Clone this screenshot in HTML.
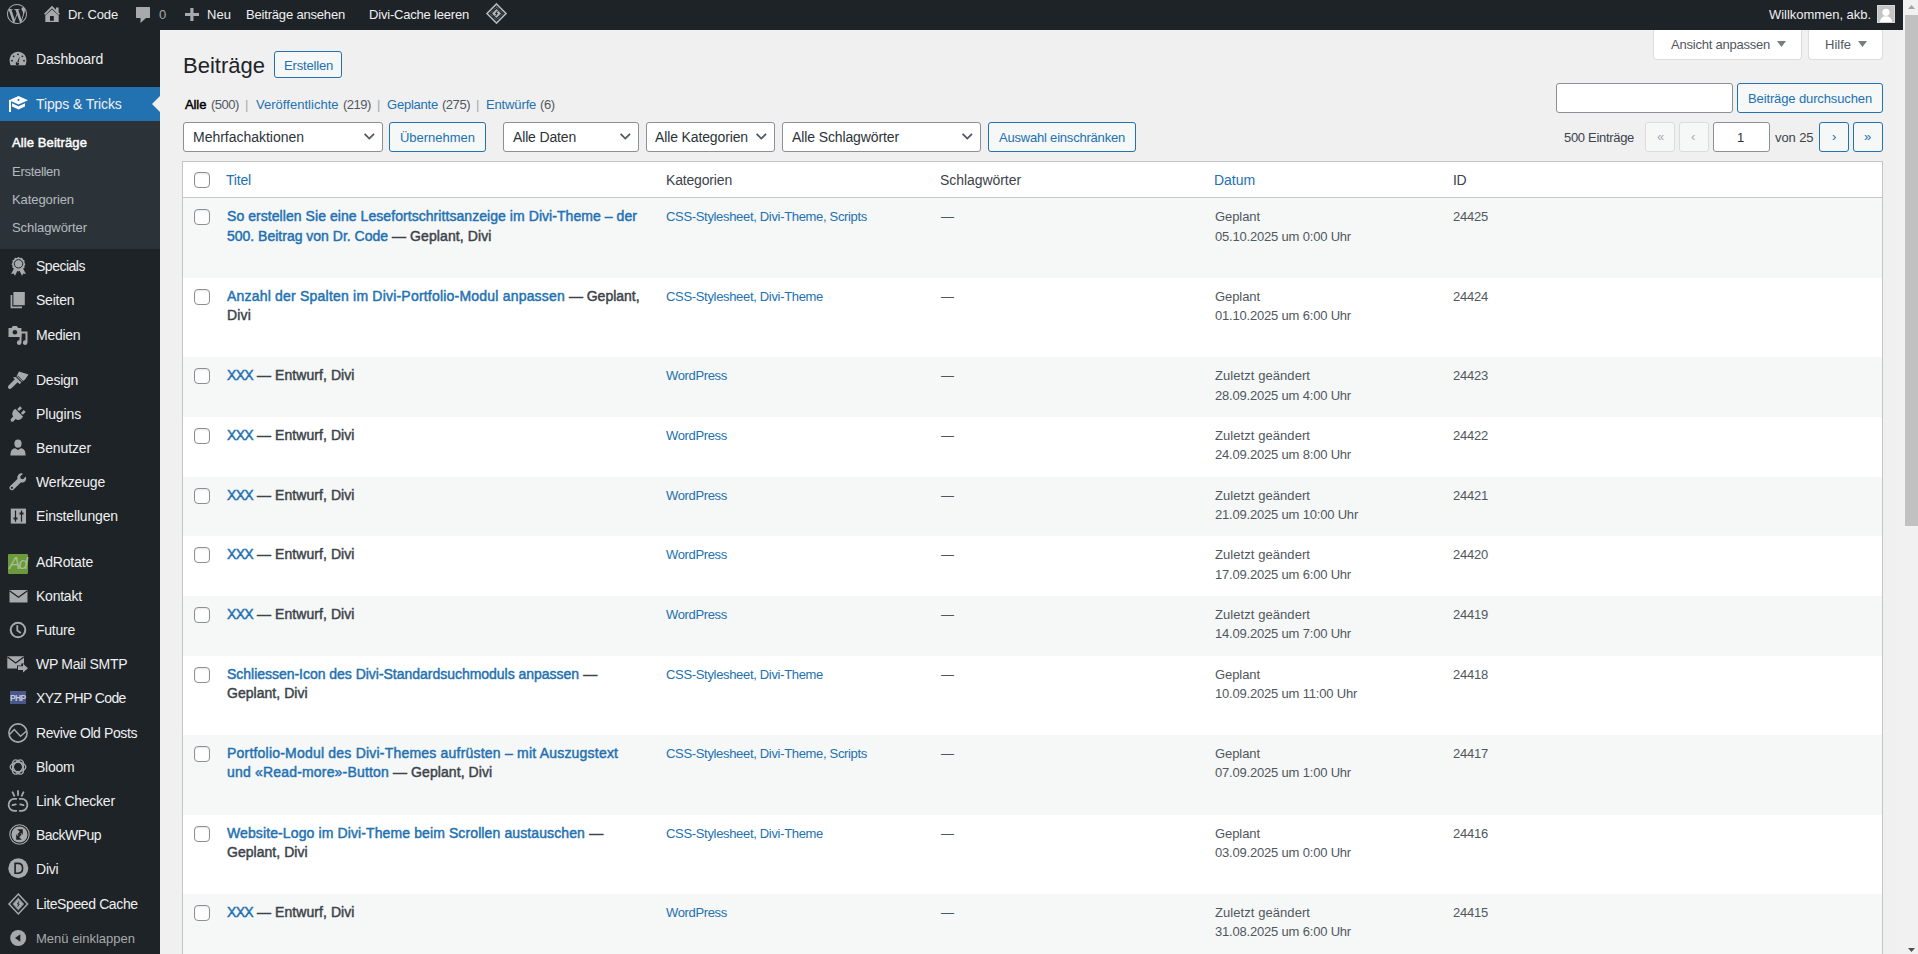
<!DOCTYPE html>
<html lang="de">
<head>
<meta charset="utf-8">
<title>Beiträge</title>
<style>
html,body{margin:0;padding:0;width:1918px;height:954px;overflow:hidden;background:#f0f0f1;font-family:'Liberation Sans',sans-serif;}
.abs{position:absolute}
.t{position:absolute;white-space:nowrap;line-height:20px;font-family:'Liberation Sans',sans-serif}
#adminbar{position:absolute;left:0;top:0;width:1903px;height:30px;background:#1d2327}
#side{position:absolute;left:0;top:30px;width:160px;height:924px;background:#1d2327}
#sub{position:absolute;left:0;top:121px;width:160px;height:128px;background:#2c3338}
#cur{position:absolute;left:0;top:87px;width:160px;height:34px;background:#2271b1}
#arrow{position:absolute;left:152px;top:96px;width:0;height:0;border-top:8px solid transparent;border-bottom:8px solid transparent;border-right:8px solid #f0f0f1}
#sb{position:absolute;left:1903px;top:0;width:15px;height:954px;background:#f1f1f1}
#thumb{position:absolute;left:1905px;top:15px;width:13px;height:511px;background:#c1c1c1}
.btn{position:absolute;box-sizing:border-box;border:1px solid #2271b1;border-radius:3px;background:#f6f7f7}
.sel{position:absolute;box-sizing:border-box;border:1px solid #8c8f94;border-radius:3px;background:#fff}
.pg{position:absolute;box-sizing:border-box;border:1px solid #dcdcde;border-radius:3px;background:#f6f7f7;top:122px;width:30px;height:30px}
.pgb{position:absolute;box-sizing:border-box;border:1px solid #2271b1;border-radius:3px;background:#f6f7f7;top:122px;width:30px;height:30px}
.tab{position:absolute;box-sizing:border-box;border:1px solid #dcdcde;border-top:0;border-radius:0 0 4px 4px;background:#fff;top:30px;height:30px}
.row{position:absolute;left:183px;width:1699px}
.cb{position:absolute;box-sizing:border-box;width:16px;height:16px;border:1px solid #8c8f94;border-radius:4px;background:#fff;box-shadow:inset 0 1px 2px rgba(0,0,0,.1)}
.chev{position:absolute;width:7px;height:7px;border-right:2px solid #50575e;border-bottom:2px solid #50575e;transform:rotate(45deg)}
svg{position:absolute;overflow:visible}
</style>
</head>
<body>
<div id="adminbar"></div>
<div id="side"></div>
<div id="cur"></div>
<div id="sub"></div>
<div id="arrow"></div>

<!-- screen options tabs -->
<div class="tab" style="left:1653px;width:149px"></div>
<div class="tab" style="left:1808px;width:75px"></div>
<svg style="left:1777px;top:41px" width="9" height="6" viewBox="0 0 9 6"><path d="M0 0H9L4.5 6Z" fill="#787c82"/></svg>
<svg style="left:1858px;top:41px" width="9" height="6" viewBox="0 0 9 6"><path d="M0 0H9L4.5 6Z" fill="#787c82"/></svg>

<!-- Erstellen button -->
<div class="btn" style="left:274px;top:51px;width:68px;height:27px"></div>

<!-- search -->
<div class="sel" style="left:1556px;top:83px;width:177px;height:30px"></div>
<div class="btn" style="left:1737px;top:83px;width:146px;height:30px"></div>

<!-- tablenav -->
<div class="sel" style="left:183px;top:122px;width:200px;height:30px"></div>
<svg style="left:364px;top:133px" width="11" height="8" viewBox="0 0 11 8"><path fill="none" stroke="#50575e" stroke-width="1.8" d="M.6 .9L5.3 5.6 10 .9"/></svg>
<div class="btn" style="left:389px;top:122px;width:97px;height:30px"></div>
<div class="sel" style="left:503px;top:122px;width:136px;height:30px"></div>
<svg style="left:620px;top:133px" width="11" height="8" viewBox="0 0 11 8"><path fill="none" stroke="#50575e" stroke-width="1.8" d="M.6 .9L5.3 5.6 10 .9"/></svg>
<div class="sel" style="left:646px;top:122px;width:129px;height:30px"></div>
<svg style="left:756px;top:133px" width="11" height="8" viewBox="0 0 11 8"><path fill="none" stroke="#50575e" stroke-width="1.8" d="M.6 .9L5.3 5.6 10 .9"/></svg>
<div class="sel" style="left:782px;top:122px;width:199px;height:30px"></div>
<svg style="left:962px;top:133px" width="11" height="8" viewBox="0 0 11 8"><path fill="none" stroke="#50575e" stroke-width="1.8" d="M.6 .9L5.3 5.6 10 .9"/></svg>
<div class="btn" style="left:988px;top:122px;width:148px;height:30px"></div>

<!-- pagination -->
<div class="pg" style="left:1645px"></div>
<div class="pg" style="left:1679px"></div>
<div class="sel" style="left:1713px;top:122px;width:57px;height:30px"></div>
<div class="pgb" style="left:1819px"></div>
<div class="pgb" style="left:1853px"></div>
<div class="t" style="left:1657px;top:127px;font-size:13px;color:#a7aaad">«</div>
<div class="t" style="left:1691px;top:127px;font-size:13px;color:#a7aaad">‹</div>
<div class="t" style="left:1832px;top:127px;font-size:13px;color:#2271b1">›</div>
<div class="t" style="left:1864px;top:127px;font-size:13px;color:#2271b1">»</div>

<!-- table -->
<div class="abs" style="left:182px;top:161px;width:1701px;height:800px;box-sizing:border-box;border:1px solid #c3c4c7;background:#fff"></div>
<div class="abs" style="left:183px;top:197px;width:1699px;height:1px;background:#c3c4c7"></div>
<div class="cb" style="left:194px;top:172px"></div>
<div class="row" style="top:198px;height:80px;background:#f6f7f7"></div>
<div class="cb" style="left:194px;top:209px"></div>
<div class="row" style="top:278px;height:79px;background:#fff"></div>
<div class="cb" style="left:194px;top:289px"></div>
<div class="row" style="top:357px;height:60px;background:#f6f7f7"></div>
<div class="cb" style="left:194px;top:368px"></div>
<div class="row" style="top:417px;height:60px;background:#fff"></div>
<div class="cb" style="left:194px;top:428px"></div>
<div class="row" style="top:477px;height:59px;background:#f6f7f7"></div>
<div class="cb" style="left:194px;top:488px"></div>
<div class="row" style="top:536px;height:60px;background:#fff"></div>
<div class="cb" style="left:194px;top:547px"></div>
<div class="row" style="top:596px;height:60px;background:#f6f7f7"></div>
<div class="cb" style="left:194px;top:607px"></div>
<div class="row" style="top:656px;height:79px;background:#fff"></div>
<div class="cb" style="left:194px;top:667px"></div>
<div class="row" style="top:735px;height:80px;background:#f6f7f7"></div>
<div class="cb" style="left:194px;top:746px"></div>
<div class="row" style="top:815px;height:79px;background:#fff"></div>
<div class="cb" style="left:194px;top:826px"></div>
<div class="row" style="top:894px;height:60px;background:#f6f7f7"></div>
<div class="cb" style="left:194px;top:905px"></div>

<div class="t" style="left:68px;top:5px;font-size:13px;font-weight:400;color:#f0f0f1;letter-spacing:-0.163px">Dr. Code</div>
<div class="t" style="left:159px;top:5px;font-size:13px;font-weight:400;color:#a7aaad;letter-spacing:0.270px">0</div>
<div class="t" style="left:207px;top:5px;font-size:13px;font-weight:400;color:#f0f0f1;letter-spacing:0.051px">Neu</div>
<div class="t" style="left:246px;top:5px;font-size:13px;font-weight:400;color:#f0f0f1;letter-spacing:-0.182px">Beiträge ansehen</div>
<div class="t" style="left:369px;top:5px;font-size:13px;font-weight:400;color:#f0f0f1;letter-spacing:-0.195px">Divi-Cache leeren</div>
<div class="t" style="left:1769px;top:5px;font-size:13px;font-weight:400;color:#f0f0f1;letter-spacing:-0.036px">Willkommen, akb.</div>
<div class="t" style="left:36px;top:49px;font-size:14px;font-weight:400;color:#f0f0f1;letter-spacing:-0.165px">Dashboard</div>
<div class="t" style="left:36px;top:94px;font-size:14px;font-weight:400;color:#f0f0f1;letter-spacing:-0.117px">Tipps &amp; Tricks</div>
<div class="t" style="left:36px;top:256px;font-size:14px;font-weight:400;color:#f0f0f1;letter-spacing:-0.490px">Specials</div>
<div class="t" style="left:36px;top:290px;font-size:14px;font-weight:400;color:#f0f0f1;letter-spacing:-0.232px">Seiten</div>
<div class="t" style="left:36px;top:325px;font-size:14px;font-weight:400;color:#f0f0f1;letter-spacing:-0.268px">Medien</div>
<div class="t" style="left:36px;top:370px;font-size:14px;font-weight:400;color:#f0f0f1;letter-spacing:-0.254px">Design</div>
<div class="t" style="left:36px;top:404px;font-size:14px;font-weight:400;color:#f0f0f1;letter-spacing:-0.131px">Plugins</div>
<div class="t" style="left:36px;top:438px;font-size:14px;font-weight:400;color:#f0f0f1;letter-spacing:-0.129px">Benutzer</div>
<div class="t" style="left:36px;top:472px;font-size:14px;font-weight:400;color:#f0f0f1;letter-spacing:-0.173px">Werkzeuge</div>
<div class="t" style="left:36px;top:506px;font-size:14px;font-weight:400;color:#f0f0f1;letter-spacing:-0.159px">Einstellungen</div>
<div class="t" style="left:36px;top:552px;font-size:14px;font-weight:400;color:#f0f0f1;letter-spacing:-0.172px">AdRotate</div>
<div class="t" style="left:36px;top:586px;font-size:14px;font-weight:400;color:#f0f0f1;letter-spacing:-0.237px">Kontakt</div>
<div class="t" style="left:36px;top:620px;font-size:14px;font-weight:400;color:#f0f0f1;letter-spacing:-0.236px">Future</div>
<div class="t" style="left:36px;top:654px;font-size:14px;font-weight:400;color:#f0f0f1;letter-spacing:-0.277px">WP Mail SMTP</div>
<div class="t" style="left:36px;top:688px;font-size:14px;font-weight:400;color:#f0f0f1;letter-spacing:-0.605px">XYZ PHP Code</div>
<div class="t" style="left:36px;top:723px;font-size:14px;font-weight:400;color:#f0f0f1;letter-spacing:-0.398px">Revive Old Posts</div>
<div class="t" style="left:36px;top:757px;font-size:14px;font-weight:400;color:#f0f0f1;letter-spacing:-0.278px">Bloom</div>
<div class="t" style="left:36px;top:791px;font-size:14px;font-weight:400;color:#f0f0f1;letter-spacing:-0.238px">Link Checker</div>
<div class="t" style="left:36px;top:825px;font-size:14px;font-weight:400;color:#f0f0f1;letter-spacing:-0.531px">BackWPup</div>
<div class="t" style="left:36px;top:859px;font-size:14px;font-weight:400;color:#f0f0f1;letter-spacing:-0.204px">Divi</div>
<div class="t" style="left:36px;top:894px;font-size:14px;font-weight:400;color:#f0f0f1;letter-spacing:-0.381px">LiteSpeed Cache</div>
<div class="t" style="left:12px;top:133px;font-size:13px;font-weight:400;color:#ffffff;letter-spacing:0.099px;-webkit-text-stroke:0.45px currentColor">Alle Beiträge</div>
<div class="t" style="left:12px;top:162px;font-size:13px;font-weight:400;color:rgba(240,246,252,.7);letter-spacing:-0.286px">Erstellen</div>
<div class="t" style="left:12px;top:190px;font-size:13px;font-weight:400;color:rgba(240,246,252,.7);letter-spacing:-0.088px">Kategorien</div>
<div class="t" style="left:12px;top:218px;font-size:13px;font-weight:400;color:rgba(240,246,252,.7);letter-spacing:-0.072px">Schlagwörter</div>
<div class="t" style="left:36px;top:929px;font-size:13px;font-weight:400;color:#a7aaad;letter-spacing:-0.001px">Menü einklappen</div>
<div class="t" style="left:183px;top:56px;font-size:22px;font-weight:400;color:#1d2327;letter-spacing:0.007px">Beiträge</div>
<div class="t" style="left:284px;top:56px;font-size:13px;font-weight:400;color:#2271b1;letter-spacing:-0.175px">Erstellen</div>
<div class="t" style="left:1671px;top:35px;font-size:13px;font-weight:400;color:#50575e;letter-spacing:-0.226px">Ansicht anpassen</div>
<div class="t" style="left:1825px;top:35px;font-size:13px;font-weight:400;color:#50575e;letter-spacing:-0.001px">Hilfe</div>
<div class="t" style="left:185px;top:95px;font-size:13px;font-weight:400;color:#000;letter-spacing:-0.094px;-webkit-text-stroke:0.45px currentColor">Alle</div>
<div class="t" style="left:211px;top:95px;font-size:13px;font-weight:400;color:#50575e;letter-spacing:-0.530px">(500)</div>
<div class="t" style="left:245px;top:95px;font-size:13px;font-weight:400;color:#a7aaad;letter-spacing:0.000px">|</div>
<div class="t" style="left:256px;top:95px;font-size:13px;font-weight:400;color:#2271b1;letter-spacing:0.030px">Veröffentlichte</div>
<div class="t" style="left:343px;top:95px;font-size:13px;font-weight:400;color:#50575e;letter-spacing:-0.530px">(219)</div>
<div class="t" style="left:377px;top:95px;font-size:13px;font-weight:400;color:#a7aaad;letter-spacing:0.000px">|</div>
<div class="t" style="left:387px;top:95px;font-size:13px;font-weight:400;color:#2271b1;letter-spacing:-0.220px">Geplante</div>
<div class="t" style="left:442px;top:95px;font-size:13px;font-weight:400;color:#50575e;letter-spacing:-0.470px">(275)</div>
<div class="t" style="left:476px;top:95px;font-size:13px;font-weight:400;color:#a7aaad;letter-spacing:0.000px">|</div>
<div class="t" style="left:486px;top:95px;font-size:13px;font-weight:400;color:#2271b1;letter-spacing:-0.138px">Entwürfe</div>
<div class="t" style="left:540px;top:95px;font-size:13px;font-weight:400;color:#50575e;letter-spacing:-0.429px">(6)</div>
<div class="t" style="left:1748px;top:89px;font-size:13px;font-weight:400;color:#2271b1;letter-spacing:-0.124px">Beiträge durchsuchen</div>
<div class="t" style="left:193px;top:127px;font-size:14px;font-weight:400;color:#2c3338;letter-spacing:-0.018px">Mehrfachaktionen</div>
<div class="t" style="left:400px;top:128px;font-size:13px;font-weight:400;color:#2271b1;letter-spacing:-0.016px">Übernehmen</div>
<div class="t" style="left:513px;top:127px;font-size:14px;font-weight:400;color:#2c3338;letter-spacing:-0.159px">Alle Daten</div>
<div class="t" style="left:655px;top:127px;font-size:14px;font-weight:400;color:#2c3338;letter-spacing:-0.130px">Alle Kategorien</div>
<div class="t" style="left:792px;top:127px;font-size:14px;font-weight:400;color:#2c3338;letter-spacing:-0.114px">Alle Schlagwörter</div>
<div class="t" style="left:999px;top:128px;font-size:13px;font-weight:400;color:#2271b1;letter-spacing:-0.204px">Auswahl einschränken</div>
<div class="t" style="left:1564px;top:128px;font-size:13px;font-weight:400;color:#3c434a;letter-spacing:-0.310px">500 Einträge</div>
<div class="t" style="left:1737px;top:128px;font-size:13px;font-weight:400;color:#2c3338;letter-spacing:0.000px">1</div>
<div class="t" style="left:1775px;top:128px;font-size:13px;font-weight:400;color:#3c434a;letter-spacing:-0.089px">von 25</div>
<div class="t" style="left:226px;top:170px;font-size:14px;font-weight:400;color:#2271b1;letter-spacing:-0.186px">Titel</div>
<div class="t" style="left:666px;top:170px;font-size:14px;font-weight:400;color:#3c434a;letter-spacing:-0.172px">Kategorien</div>
<div class="t" style="left:940px;top:170px;font-size:14px;font-weight:400;color:#3c434a;letter-spacing:-0.059px">Schlagwörter</div>
<div class="t" style="left:1214px;top:170px;font-size:14px;font-weight:400;color:#2271b1;letter-spacing:-0.047px">Datum</div>
<div class="t" style="left:1453px;top:170px;font-size:14px;font-weight:400;color:#3c434a;letter-spacing:-0.500px">ID</div>
<div class="t" style="left:227px;top:206px;font-size:14px;font-weight:400"><span style="color:#2271b1;letter-spacing:0.059px;-webkit-text-stroke:0.45px currentColor">So erstellen Sie eine Lesefortschrittsanzeige im Divi-Theme – der</span></div>
<div class="t" style="left:227px;top:226px;font-size:14px;font-weight:400"><span style="color:#2271b1;letter-spacing:-0.004px;-webkit-text-stroke:0.45px currentColor">500. Beitrag von Dr. Code</span><span style="color:#3c434a;letter-spacing:0.099px;-webkit-text-stroke:0.45px currentColor"> — Geplant, Divi</span></div>
<div class="t" style="left:666px;top:207px;font-size:13px;font-weight:400;color:#2271b1;letter-spacing:-0.326px">CSS-Stylesheet, Divi-Theme, Scripts</div>
<div class="t" style="left:941px;top:207px;font-size:13px;font-weight:400;color:#50575e;letter-spacing:1.000px">—</div>
<div class="t" style="left:1215px;top:207px;font-size:13px;font-weight:400;color:#50575e;letter-spacing:-0.076px">Geplant</div>
<div class="t" style="left:1215px;top:227px;font-size:13px;font-weight:400;color:#50575e;letter-spacing:-0.191px">05.10.2025 um 0:00 Uhr</div>
<div class="t" style="left:1453px;top:207px;font-size:13px;font-weight:400;color:#50575e;letter-spacing:-0.230px">24425</div>
<div class="t" style="left:227px;top:286px;font-size:14px;font-weight:400"><span style="color:#2271b1;letter-spacing:0.204px;-webkit-text-stroke:0.45px currentColor">Anzahl der Spalten im Divi-Portfolio-Modul anpassen</span><span style="color:#3c434a;letter-spacing:-0.018px;-webkit-text-stroke:0.45px currentColor"> — Geplant,</span></div>
<div class="t" style="left:227px;top:305px;font-size:14px;font-weight:400"><span style="color:#3c434a;letter-spacing:0.167px;-webkit-text-stroke:0.45px currentColor">Divi</span></div>
<div class="t" style="left:666px;top:287px;font-size:13px;font-weight:400;color:#2271b1;letter-spacing:-0.325px">CSS-Stylesheet, Divi-Theme</div>
<div class="t" style="left:941px;top:287px;font-size:13px;font-weight:400;color:#50575e;letter-spacing:1.000px">—</div>
<div class="t" style="left:1215px;top:287px;font-size:13px;font-weight:400;color:#50575e;letter-spacing:-0.076px">Geplant</div>
<div class="t" style="left:1215px;top:306px;font-size:13px;font-weight:400;color:#50575e;letter-spacing:-0.191px">01.10.2025 um 6:00 Uhr</div>
<div class="t" style="left:1453px;top:287px;font-size:13px;font-weight:400;color:#50575e;letter-spacing:-0.230px">24424</div>
<div class="t" style="left:227px;top:365px;font-size:14px;font-weight:400"><span style="color:#2271b1;letter-spacing:-0.671px;-webkit-text-stroke:0.45px currentColor">XXX</span><span style="color:#3c434a;letter-spacing:0.072px;-webkit-text-stroke:0.45px currentColor"> — Entwurf, Divi</span></div>
<div class="t" style="left:666px;top:366px;font-size:13px;font-weight:400;color:#2271b1;letter-spacing:-0.356px">WordPress</div>
<div class="t" style="left:941px;top:366px;font-size:13px;font-weight:400;color:#50575e;letter-spacing:1.000px">—</div>
<div class="t" style="left:1215px;top:366px;font-size:13px;font-weight:400;color:#50575e;letter-spacing:0.066px">Zuletzt geändert</div>
<div class="t" style="left:1215px;top:386px;font-size:13px;font-weight:400;color:#50575e;letter-spacing:-0.191px">28.09.2025 um 4:00 Uhr</div>
<div class="t" style="left:1453px;top:366px;font-size:13px;font-weight:400;color:#50575e;letter-spacing:-0.230px">24423</div>
<div class="t" style="left:227px;top:425px;font-size:14px;font-weight:400"><span style="color:#2271b1;letter-spacing:-0.671px;-webkit-text-stroke:0.45px currentColor">XXX</span><span style="color:#3c434a;letter-spacing:0.072px;-webkit-text-stroke:0.45px currentColor"> — Entwurf, Divi</span></div>
<div class="t" style="left:666px;top:426px;font-size:13px;font-weight:400;color:#2271b1;letter-spacing:-0.356px">WordPress</div>
<div class="t" style="left:941px;top:426px;font-size:13px;font-weight:400;color:#50575e;letter-spacing:1.000px">—</div>
<div class="t" style="left:1215px;top:426px;font-size:13px;font-weight:400;color:#50575e;letter-spacing:0.066px">Zuletzt geändert</div>
<div class="t" style="left:1215px;top:445px;font-size:13px;font-weight:400;color:#50575e;letter-spacing:-0.191px">24.09.2025 um 8:00 Uhr</div>
<div class="t" style="left:1453px;top:426px;font-size:13px;font-weight:400;color:#50575e;letter-spacing:-0.230px">24422</div>
<div class="t" style="left:227px;top:485px;font-size:14px;font-weight:400"><span style="color:#2271b1;letter-spacing:-0.671px;-webkit-text-stroke:0.45px currentColor">XXX</span><span style="color:#3c434a;letter-spacing:0.072px;-webkit-text-stroke:0.45px currentColor"> — Entwurf, Divi</span></div>
<div class="t" style="left:666px;top:486px;font-size:13px;font-weight:400;color:#2271b1;letter-spacing:-0.356px">WordPress</div>
<div class="t" style="left:941px;top:486px;font-size:13px;font-weight:400;color:#50575e;letter-spacing:1.000px">—</div>
<div class="t" style="left:1215px;top:486px;font-size:13px;font-weight:400;color:#50575e;letter-spacing:0.066px">Zuletzt geändert</div>
<div class="t" style="left:1215px;top:505px;font-size:13px;font-weight:400;color:#50575e;letter-spacing:-0.192px">21.09.2025 um 10:00 Uhr</div>
<div class="t" style="left:1453px;top:486px;font-size:13px;font-weight:400;color:#50575e;letter-spacing:-0.230px">24421</div>
<div class="t" style="left:227px;top:544px;font-size:14px;font-weight:400"><span style="color:#2271b1;letter-spacing:-0.671px;-webkit-text-stroke:0.45px currentColor">XXX</span><span style="color:#3c434a;letter-spacing:0.072px;-webkit-text-stroke:0.45px currentColor"> — Entwurf, Divi</span></div>
<div class="t" style="left:666px;top:545px;font-size:13px;font-weight:400;color:#2271b1;letter-spacing:-0.356px">WordPress</div>
<div class="t" style="left:941px;top:545px;font-size:13px;font-weight:400;color:#50575e;letter-spacing:1.000px">—</div>
<div class="t" style="left:1215px;top:545px;font-size:13px;font-weight:400;color:#50575e;letter-spacing:0.066px">Zuletzt geändert</div>
<div class="t" style="left:1215px;top:565px;font-size:13px;font-weight:400;color:#50575e;letter-spacing:-0.191px">17.09.2025 um 6:00 Uhr</div>
<div class="t" style="left:1453px;top:545px;font-size:13px;font-weight:400;color:#50575e;letter-spacing:-0.230px">24420</div>
<div class="t" style="left:227px;top:604px;font-size:14px;font-weight:400"><span style="color:#2271b1;letter-spacing:-0.671px;-webkit-text-stroke:0.45px currentColor">XXX</span><span style="color:#3c434a;letter-spacing:0.072px;-webkit-text-stroke:0.45px currentColor"> — Entwurf, Divi</span></div>
<div class="t" style="left:666px;top:605px;font-size:13px;font-weight:400;color:#2271b1;letter-spacing:-0.356px">WordPress</div>
<div class="t" style="left:941px;top:605px;font-size:13px;font-weight:400;color:#50575e;letter-spacing:1.000px">—</div>
<div class="t" style="left:1215px;top:605px;font-size:13px;font-weight:400;color:#50575e;letter-spacing:0.066px">Zuletzt geändert</div>
<div class="t" style="left:1215px;top:624px;font-size:13px;font-weight:400;color:#50575e;letter-spacing:-0.191px">14.09.2025 um 7:00 Uhr</div>
<div class="t" style="left:1453px;top:605px;font-size:13px;font-weight:400;color:#50575e;letter-spacing:-0.230px">24419</div>
<div class="t" style="left:227px;top:664px;font-size:14px;font-weight:400"><span style="color:#2271b1;letter-spacing:-0.025px;-webkit-text-stroke:0.45px currentColor">Schliessen-Icon des Divi-Standardsuchmoduls anpassen</span><span style="color:#3c434a;letter-spacing:0.255px;-webkit-text-stroke:0.45px currentColor"> —</span></div>
<div class="t" style="left:227px;top:683px;font-size:14px;font-weight:400"><span style="color:#3c434a;letter-spacing:0.035px;-webkit-text-stroke:0.45px currentColor">Geplant, Divi</span></div>
<div class="t" style="left:666px;top:665px;font-size:13px;font-weight:400;color:#2271b1;letter-spacing:-0.325px">CSS-Stylesheet, Divi-Theme</div>
<div class="t" style="left:941px;top:665px;font-size:13px;font-weight:400;color:#50575e;letter-spacing:1.000px">—</div>
<div class="t" style="left:1215px;top:665px;font-size:13px;font-weight:400;color:#50575e;letter-spacing:-0.076px">Geplant</div>
<div class="t" style="left:1215px;top:684px;font-size:13px;font-weight:400;color:#50575e;letter-spacing:-0.191px">10.09.2025 um 11:00 Uhr</div>
<div class="t" style="left:1453px;top:665px;font-size:13px;font-weight:400;color:#50575e;letter-spacing:-0.230px">24418</div>
<div class="t" style="left:227px;top:743px;font-size:14px;font-weight:400"><span style="color:#2271b1;letter-spacing:0.208px;-webkit-text-stroke:0.45px currentColor">Portfolio-Modul des Divi-Themes aufrüsten – mit Auszugstext</span></div>
<div class="t" style="left:227px;top:762px;font-size:14px;font-weight:400"><span style="color:#2271b1;letter-spacing:0.182px;-webkit-text-stroke:0.45px currentColor">und «Read-more»-Button</span><span style="color:#3c434a;letter-spacing:0.086px;-webkit-text-stroke:0.45px currentColor"> — Geplant, Divi</span></div>
<div class="t" style="left:666px;top:744px;font-size:13px;font-weight:400;color:#2271b1;letter-spacing:-0.326px">CSS-Stylesheet, Divi-Theme, Scripts</div>
<div class="t" style="left:941px;top:744px;font-size:13px;font-weight:400;color:#50575e;letter-spacing:1.000px">—</div>
<div class="t" style="left:1215px;top:744px;font-size:13px;font-weight:400;color:#50575e;letter-spacing:-0.076px">Geplant</div>
<div class="t" style="left:1215px;top:763px;font-size:13px;font-weight:400;color:#50575e;letter-spacing:-0.191px">07.09.2025 um 1:00 Uhr</div>
<div class="t" style="left:1453px;top:744px;font-size:13px;font-weight:400;color:#50575e;letter-spacing:-0.230px">24417</div>
<div class="t" style="left:227px;top:823px;font-size:14px;font-weight:400"><span style="color:#2271b1;letter-spacing:0.111px;-webkit-text-stroke:0.45px currentColor">Website-Logo im Divi-Theme beim Scrollen austauschen</span><span style="color:#3c434a;letter-spacing:0.255px;-webkit-text-stroke:0.45px currentColor"> —</span></div>
<div class="t" style="left:227px;top:842px;font-size:14px;font-weight:400"><span style="color:#3c434a;letter-spacing:0.035px;-webkit-text-stroke:0.45px currentColor">Geplant, Divi</span></div>
<div class="t" style="left:666px;top:824px;font-size:13px;font-weight:400;color:#2271b1;letter-spacing:-0.325px">CSS-Stylesheet, Divi-Theme</div>
<div class="t" style="left:941px;top:824px;font-size:13px;font-weight:400;color:#50575e;letter-spacing:1.000px">—</div>
<div class="t" style="left:1215px;top:824px;font-size:13px;font-weight:400;color:#50575e;letter-spacing:-0.076px">Geplant</div>
<div class="t" style="left:1215px;top:843px;font-size:13px;font-weight:400;color:#50575e;letter-spacing:-0.191px">03.09.2025 um 0:00 Uhr</div>
<div class="t" style="left:1453px;top:824px;font-size:13px;font-weight:400;color:#50575e;letter-spacing:-0.230px">24416</div>
<div class="t" style="left:227px;top:902px;font-size:14px;font-weight:400"><span style="color:#2271b1;letter-spacing:-0.671px;-webkit-text-stroke:0.45px currentColor">XXX</span><span style="color:#3c434a;letter-spacing:0.072px;-webkit-text-stroke:0.45px currentColor"> — Entwurf, Divi</span></div>
<div class="t" style="left:666px;top:903px;font-size:13px;font-weight:400;color:#2271b1;letter-spacing:-0.356px">WordPress</div>
<div class="t" style="left:941px;top:903px;font-size:13px;font-weight:400;color:#50575e;letter-spacing:1.000px">—</div>
<div class="t" style="left:1215px;top:903px;font-size:13px;font-weight:400;color:#50575e;letter-spacing:0.066px">Zuletzt geändert</div>
<div class="t" style="left:1215px;top:922px;font-size:13px;font-weight:400;color:#50575e;letter-spacing:-0.191px">31.08.2025 um 6:00 Uhr</div>
<div class="t" style="left:1453px;top:903px;font-size:13px;font-weight:400;color:#50575e;letter-spacing:-0.230px">24415</div>

<!-- scrollbar -->
<div id="sb"></div>
<div id="thumb"></div>
<svg style="left:1908px;top:5px" width="7" height="4" viewBox="0 0 7 4"><path d="M0 4L3.5 0L7 4Z" fill="#a3a3a3"/></svg>
<svg style="left:1908px;top:948px" width="7" height="4" viewBox="0 0 7 4"><path d="M0 0H7L3.5 4Z" fill="#505050"/></svg>

<!-- ICONS -->
<!-- admin bar icons -->
<svg style="left:7px;top:4px" width="20" height="20" viewBox="0 0 24 24"><path fill="#a7aaad" d="M21.469 6.825c.84 1.537 1.318 3.3 1.318 5.175 0 3.979-2.156 7.456-5.363 9.325l3.295-9.527c.615-1.54.82-2.771.82-3.864 0-.405-.026-.78-.07-1.11m-7.981.105c.647-.03 1.232-.105 1.232-.105.582-.075.514-.93-.067-.899 0 0-1.755.135-2.88.135-1.064 0-2.85-.15-2.85-.15-.585-.03-.661.855-.075.885 0 0 .54.061 1.125.09l1.68 4.605-2.37 7.08L5.354 6.9c.649-.03 1.234-.1 1.234-.1.585-.075.516-.93-.065-.896 0 0-1.746.138-2.874.138-.2 0-.438-.008-.69-.015C4.911 3.150 8.235 1.215 12 1.215c2.809 0 5.365 1.072 7.286 2.833-.046-.003-.091-.009-.141-.009-1.06 0-1.812.923-1.812 1.914 0 .89.513 1.643 1.06 2.531.411.72.89 1.643.89 2.977 0 .915-.354 1.994-.821 3.479l-1.075 3.585-3.9-11.61.001.014zM12 22.784c-1.059 0-2.081-.153-3.048-.437l3.237-9.406 3.315 9.087c.024.053.05.101.078.149-1.12.393-2.325.609-3.582.609M1.211 12c0-1.564.336-3.05.935-4.39L7.29 21.709C3.694 19.96 1.212 16.271 1.211 12M12 0C5.385 0 0 5.385 0 12s5.385 12 12 12 12-5.385 12-12S18.615 0 12 0"/></svg>
<svg style="left:44px;top:5px" width="17" height="18" viewBox="0 0 17 18"><path fill="none" stroke="#a7aaad" stroke-width="1.9" d="M.7 9.3L8 2 15.3 9.3"/><rect x="12" y="2.5" width="2.6" height="4.5" fill="#a7aaad"/><path fill="#a7aaad" d="M1.3 10.6L8 4.6 14.7 10.6V17H1.3Z"/><rect x="6" y="11" width="3.8" height="4.8" fill="#1d2327"/></svg>
<svg style="left:136px;top:7px" width="14" height="16" viewBox="0 0 14 16"><path fill="#a7aaad" d="M0.5 0H13.5Q14 0 14 .5V10.5Q14 11 13.5 11H10L4.5 16V11H.5Q0 11 0 10.5V.5Q0 0 .5 0Z"/></svg>
<svg style="left:185px;top:8px" width="14" height="13" viewBox="0 0 14 13"><path fill="#a7aaad" d="M5.3 0h3.2v5H14v3H8.5v5H5.3V8H0V5h5.3z"/></svg>
<svg style="left:486px;top:3px" width="21" height="21" viewBox="0 0 21 21"><path fill="none" stroke="#b4b7ba" stroke-width="1.6" d="M10.5 1L20 10.5 10.5 20 1 10.5Z"/><path fill="none" stroke="#9a9ea3" stroke-width="1" stroke-dasharray="1 1" d="M10.5 4L17 10.5 10.5 17 4 10.5Z"/><path fill="#b4b7ba" d="M10.5 6L15 10.5 10.5 15 6 10.5Z"/><path fill="none" stroke="#1d2327" stroke-width="1" d="M11.5 8L9.5 10.5h2L9.5 13"/></svg>
<div class="abs" style="left:1877px;top:5px;width:18px;height:18px;box-sizing:border-box;border:1px solid #d5d5d5;background:#c4c4c4;overflow:hidden"><svg style="left:0;top:0" width="16" height="16" viewBox="0 0 16 16"><circle cx="8" cy="6.3" r="3.6" fill="#fff"/><path fill="#fff" d="M2 16Q2.5 10.3 8 10.3T14 16Z"/></svg></div>

<!-- sidebar icons -->
<!-- dashboard gauge -->
<svg style="left:9px;top:51px" width="18" height="15" viewBox="0 0 18 15"><path fill="#a7aaad" d="M9 .7C4.2.7.6 4.5.6 9.3c0 1.9.4 3.4 1 4.9h14.8c.6-1.5 1-3 1-4.9C17.4 4.5 13.8.7 9 .7z"/><g fill="#1d2327"><circle cx="9" cy="3.3" r=".9"/><circle cx="4.6" cy="5.3" r=".9"/><circle cx="13.4" cy="5.3" r=".9"/><circle cx="3" cy="9.7" r=".9"/><circle cx="15" cy="9.7" r=".9"/><path d="M10.8 5.3L8.2 10.8a1.7 1.7 0 1 0 1.5.6z"/></g><circle cx="8.9" cy="11.3" r=".8" fill="#a7aaad"/></svg>
<!-- graduation cap (current, white) -->
<svg style="left:8px;top:95px" width="21" height="18" viewBox="0 0 21 18"><path fill="#fff" d="M10.5 1L20 5.3 10.5 9.6 1 5.3Z"/><path fill="#fff" d="M4 8.2L10.5 11.2 17 8.2V11.6L10.5 14.6 4 11.6Z"/><rect x="1" y="5" width="2" height="12" fill="#fff"/><circle cx="10.5" cy="5" r="1" fill="#2271b1"/></svg>
<!-- specials ribbon -->
<svg style="left:11px;top:257px" width="15" height="19" viewBox="0 0 15 19"><path fill="#a7aaad" d="M7.5 0l1.7 1 1.9-.2.8 1.8 1.7 1-.2 1.9 1 1.7-1 1.7.2 1.9-1.7 1-.8 1.8-1.9-.2-1.7 1-1.7-1-1.9.2-.8-1.8-1.7-1 .2-1.9-1-1.7 1-1.7-.2-1.9 1.7-1 .8-1.8 1.9.2z"/><circle cx="7.5" cy="6.8" r="4.2" fill="none" stroke="#1d2327" stroke-width="1"/><path fill="#a7aaad" d="M3 11.5L0 17l2.6-.4 1.4 2.2 2.7-5.5zM12 11.5L15 17l-2.6-.4-1.4 2.2-2.7-5.5z"/></svg>
<!-- pages -->
<svg style="left:10px;top:292px" width="16" height="17" viewBox="0 0 16 17"><path fill="#a7aaad" d="M.6 3H2.3V14.5H12V16.2H.6z"/><rect x="3.4" y="0" width="11.4" height="13.2" fill="#a7aaad"/></svg>
<!-- media -->
<svg style="left:8px;top:326px" width="20" height="19" viewBox="0 0 20 19"><path fill="#a7aaad" d="M.5 2H3.5L4.8 0H8.8L10.2 2H13.4V11H.5z"/><circle cx="6.9" cy="6.3" r="2.3" fill="#1d2327"/><path fill="#a7aaad" d="M11.5 5.5H19.5V16.5A2.3 2.3 0 1 1 17.5 14.3V7.5H13.5V16.5A2.3 2.3 0 1 1 11.5 14.3z"/></svg>
<!-- design brush -->
<svg style="left:8px;top:371px" width="21" height="18" viewBox="0 0 21 18"><path fill="#a7aaad" d="M11 .5L20.5 3.6 17 8.5 14 10.8 8.5 5.3z"/><path fill="#a7aaad" d="M7.8 6L13.3 11.5 11.6 13.2 9.7 11.3 3.5 17.3Q1.5 18.6.3 17.3-.7 15.8.8 14.3L6.8 8.3 4.9 6.4z"/><path stroke="#1d2327" stroke-width=".9" d="M9.6 4.8L14.7 9.9"/></svg>
<!-- plugins -->
<svg style="left:10px;top:406px" width="16" height="16" viewBox="0 0 16 16"><path fill="#a7aaad" d="M5.2 2.8L13.2 10.8 11 13Q8.2 14.8 5.6 13L3.2 15.4Q2.2 16.2 1.1 15.2 .1 14 .9 13L3.2 10.6Q1.4 8 3.2 4.8z"/><path fill="#a7aaad" d="M7.2 3.2L10.1.3 12 2.2 9.1 5.1zM10.9 6.9L13.8 4 15.7 5.9 12.8 8.8z"/></svg>
<!-- users -->
<svg style="left:10px;top:439px" width="16" height="17" viewBox="0 0 16 17"><ellipse cx="8" cy="4.6" rx="3.6" ry="4.2" fill="#a7aaad"/><path fill="#a7aaad" d="M.3 16.5Q.3 9.7 5.2 9.3L8 11 10.8 9.3Q15.7 9.7 15.7 16.5z"/></svg>
<!-- tools wrench -->
<svg style="left:9px;top:473px" width="18" height="18" viewBox="0 0 18 18"><path fill="#a7aaad" d="M16.8 3.5L14 6.3 11.7 5.8 11.2 3.5 14 .7Q11.5-.3 9.6 1.5 7.8 3.3 8.4 5.9L1 13.3Q-.3 14.8 1 16.6 2.7 18 4.4 16.8L11.8 9.4Q14.5 10.1 16.2 8.2 18 6.3 16.8 3.5zM2.9 15.9A1.1 1.1 0 1 1 3 13.7 1.1 1.1 0 0 1 2.9 15.9z"/></svg>
<!-- settings -->
<svg style="left:10px;top:508px" width="17" height="16" viewBox="0 0 17 16"><rect x=".8" y=".6" width="15.2" height="15" fill="#a7aaad"/><path stroke="#1d2327" stroke-width="1.2" d="M5.5 2.5V13.8M11.5 2.5V13.8"/><path stroke="#1d2327" stroke-width="2" d="M3.5 10.5H7.5M9.5 5.5H13.5"/></svg>
<!-- adrotate -->
<div class="abs" style="left:8px;top:554px;width:20px;height:20px;background:#6a9a3a;border-radius:1px"></div>
<div class="t" style="left:9px;top:554px;font-size:17px;line-height:20px;color:#a9bf98;letter-spacing:-1.8px;font-style:italic">Ad</div>
<!-- kontakt envelope -->
<svg style="left:9px;top:590px" width="19" height="13" viewBox="0 0 19 13"><path fill="#a7aaad" d="M.5 0H18.5V12.5H.5z"/><path fill="none" stroke="#1d2327" stroke-width="1.3" d="M.5 .8L9.5 7.3 18.5 .8"/></svg>
<!-- future clock -->
<svg style="left:9px;top:621px" width="18" height="18" viewBox="0 0 18 18"><circle cx="9" cy="9" r="7.3" fill="none" stroke="#a7aaad" stroke-width="2"/><path fill="none" stroke="#a7aaad" stroke-width="1.8" d="M8.3 4.3V9.5L11.8 12"/></svg>
<!-- wp mail smtp -->
<svg style="left:7px;top:656px" width="22" height="17" viewBox="0 0 22 17"><path fill="#a7aaad" d="M.3 .2H17V7.5H14.3V9.5H10V12.5H.3z"/><path fill="none" stroke="#1d2327" stroke-width="1.3" d="M.5 .9L8.7 7 16.8 .9"/><path fill="#a7aaad" d="M11 10.3H16V7.8L21 12.2 16 16.6V14.1H11z"/></svg>
<!-- php -->
<div class="abs" style="left:10px;top:691px;width:16px;height:13px;background:#4a5789"></div>
<div class="t" style="left:10px;top:688px;font-size:8.5px;line-height:20px;color:#c3c8d8;letter-spacing:-.7px;font-weight:700">PHP</div>
<!-- revive -->
<svg style="left:8px;top:723px" width="20" height="20" viewBox="0 0 20 20"><circle cx="10" cy="10" r="9.1" fill="none" stroke="#a7aaad" stroke-width="1.6"/><path fill="none" stroke="#a7aaad" stroke-width="1.5" d="M1.5 11.5L6.3 6.5 12.5 13.3 18.5 8"/></svg>
<!-- bloom -->
<svg style="left:9px;top:758px" width="18" height="18" viewBox="0 0 18 18"><g fill="none" stroke="#a7aaad" stroke-width="1.4"><ellipse cx="9" cy="9" rx="7.8" ry="4.6"/><ellipse cx="9" cy="9" rx="7.8" ry="4.6" transform="rotate(60 9 9)"/><ellipse cx="9" cy="9" rx="7.8" ry="4.6" transform="rotate(120 9 9)"/></g></svg>
<!-- link checker -->
<svg style="left:7px;top:790px" width="22" height="22" viewBox="0 0 22 22"><g fill="none" stroke="#a7aaad" stroke-width="1.8" stroke-linecap="round"><path d="M11 1V5M5.5 2.2L7.3 5.8M16.5 2.2L14.7 5.8"/><path d="M9.3 8.8H7.2A5.6 6 0 0 0 7.2 20.8H9.3"/><path d="M12.7 8.8H14.8A5.6 6 0 0 1 14.8 20.8H12.7"/><path d="M5.5 15.2L8.8 14.4M13.2 14.4L16.5 15.2"/></g></svg>
<!-- backwpup -->
<svg style="left:9px;top:824px" width="21" height="21" viewBox="0 0 21 21"><circle cx="10.5" cy="10.5" r="9.7" fill="none" stroke="#a7aaad" stroke-width="1.1"/><circle cx="10.5" cy="10.5" r="8" fill="#a7aaad"/><path fill="#1d2327" d="M8.2 5.2L13.8 5.2 13.8 10.8 12 9 9.6 11.4 8.4 10.2 10.8 7.8 8.2 5.2Z"/><path fill="#1d2327" d="M12.8 15.8L7.2 15.8 7.2 10.2 9 12 11.4 9.6 12.6 10.8 10.2 13.2Z"/></svg>
<!-- divi D -->
<svg style="left:8px;top:858px" width="21" height="21" viewBox="0 0 21 21"><circle cx="10.3" cy="10.3" r="10" fill="#a7aaad"/><path fill="none" stroke="#1d2327" stroke-width="1.6" d="M7.1 5.4H10.2Q14.6 5.4 14.6 10.3 14.6 15.2 10.2 15.2H7.1Z"/></svg>
<!-- litespeed -->
<svg style="left:8px;top:893px" width="21" height="22" viewBox="0 0 21 22"><path fill="none" stroke="#a7aaad" stroke-width="1.5" d="M10.3 1L19.6 11 10.3 21 1 11Z"/><path fill="#8a8e93" d="M10.3 4.6L16.2 11 10.3 17.4 4.4 11Z"/><path fill="#a7aaad" d="M10.3 6L14.9 11 10.3 16 5.7 11Z"/><path fill="none" stroke="#1d2327" stroke-width="1" d="M11 8.3L9.5 11H11.2L9.6 13.7"/></svg>
<!-- collapse -->
<svg style="left:10px;top:930px" width="17" height="17" viewBox="0 0 17 17"><circle cx="8.2" cy="8" r="8" fill="#a7aaad"/><path fill="#1d2327" d="M5 8L10.3 4.3V11.7Z"/></svg>

</body>
</html>
